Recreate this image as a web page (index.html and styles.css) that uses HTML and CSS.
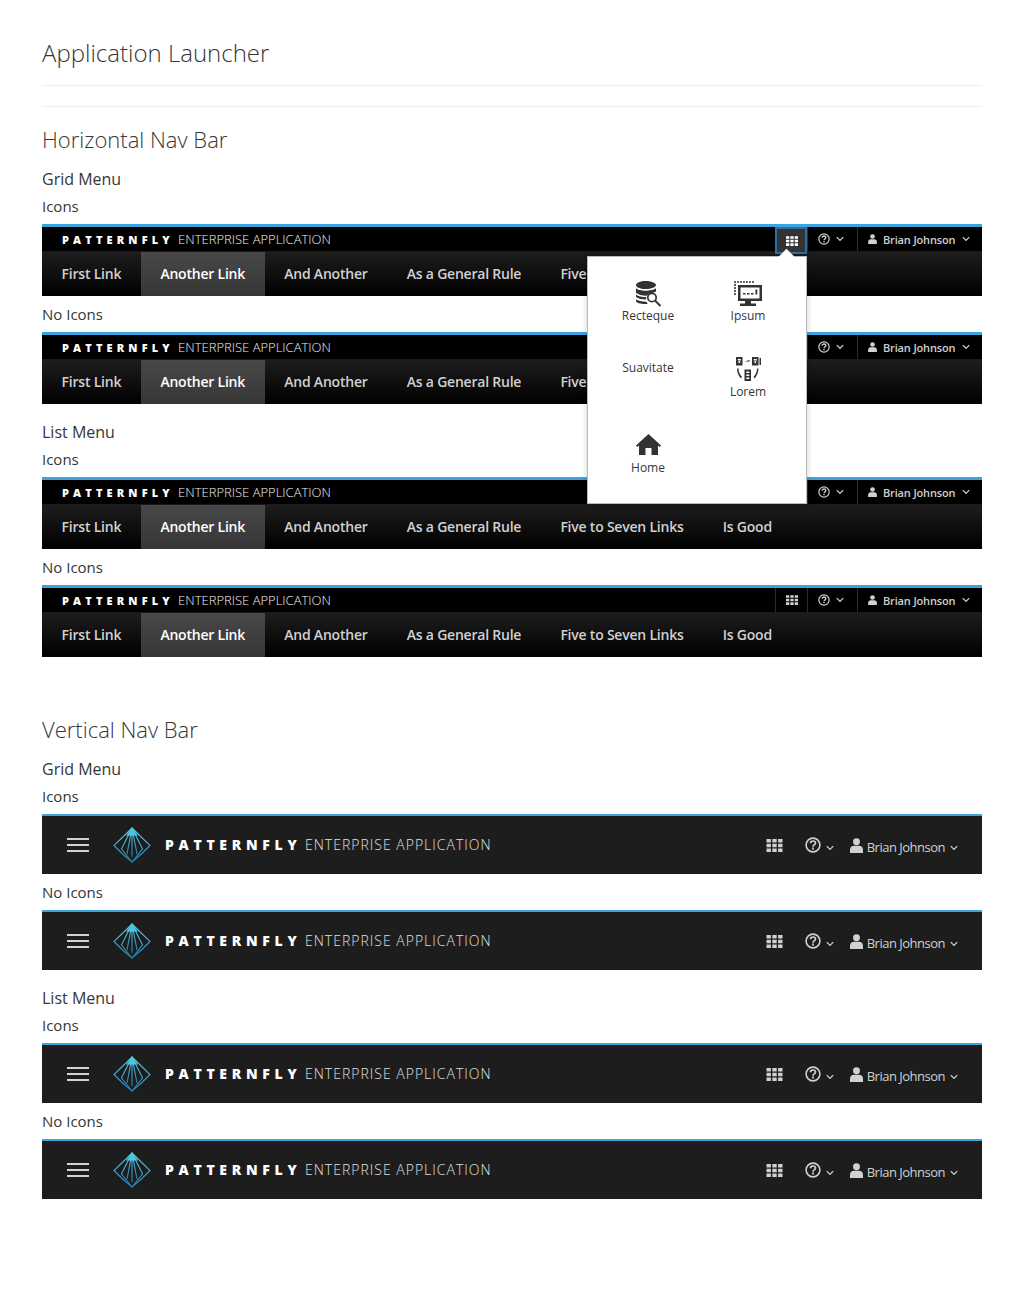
FILE: index.html
```html
<!DOCTYPE html>
<html lang="en">
<head>
  <meta charset="UTF-8" />
  <title>Application Launcher</title>
  <link rel="stylesheet" href="styles.css">
</head>
<body>

<svg class="defs" width="0" height="0" aria-hidden="true">
  <defs>
    <linearGradient id="logo-grad" x1="0" y1="0" x2="0" y2="1">
      <stop offset="0" stop-color="#5fd0e8"/>
      <stop offset="1" stop-color="#1f7fb5"/>
    </linearGradient>
    <symbol id="i-apps" viewBox="0 0 16 13">
      <path fill="currentColor" d="M0 0h4.4v3.6H0zM5.8 0h4.4v3.6H5.8zM11.6 0H16v3.6h-4.4zM0 4.7h4.4v3.6H0zM5.8 4.7h4.4v3.6H5.8zM11.6 4.7H16v3.6h-4.4zM0 9.4h4.4V13H0zM5.8 9.4h4.4V13H5.8zM11.6 9.4H16V13h-4.4z"/>
    </symbol>
    <symbol id="i-help" viewBox="0 0 16 16">
      <circle cx="8" cy="8" r="6.9" fill="none" stroke="currentColor" stroke-width="1.6"/>
      <path fill="none" stroke="currentColor" stroke-width="1.7" d="M5.5 6.2c0-1.5 1.2-2.2 2.5-2.2s2.5.8 2.5 2.1c0 1.8-2.5 1.7-2.5 3.6"/>
      <path fill="currentColor" d="M7.1 10.6h1.8v1.8H7.1z"/>
    </symbol>
    <symbol id="i-user" viewBox="0 0 14 16">
      <circle cx="7" cy="4" r="3.7" fill="currentColor"/>
      <path fill="currentColor" d="M0 16v-3.4C0 9.800 2 8.300 4 8.300h6c2 0 4 1.500 4 4.300V16z"/>
    </symbol>
    <symbol id="i-caret" viewBox="0 0 10 7">
      <path fill="none" stroke="currentColor" stroke-width="1.6" d="M1 1.200l4 4 4-4"/>
    </symbol>
    <symbol id="i-logo" viewBox="0 0 38 36">
      <g fill="none" stroke="url(#logo-grad)" stroke-width="1.100">
        <path d="M19 1L37 18.500 29 26.500 19 35 9 26.500 1 18.500z"/>
        <path d="M19 1L8.500 22 19 35 29.500 22z"/>
        <path d="M19 1L14 27M19 1L24 27M19 1V30"/>
      </g>
      <path fill="#4fc3e0" d="M19 1l6 7.500H13z"/>
    </symbol>
    <symbol id="i-db" viewBox="0 0 27 26">
      <path fill="currentColor" d="M1 4c0-2.200 4.500-4 9.500-4S21 1.800 21 4s-4.500 4-10.500 4S1 6.200 1 4z"/>
      <path fill="currentColor" d="M1 7c1.500 2 5.500 2.700 9.500 2.700S19.500 9 21 7v3.500c-1.500.8-3 1.300-4.500 1.500-2 .2-3.500 1.200-4.400 2.700-4 .2-8.600-.8-11.100-3zM1 13.500c2 1.800 6 2.700 10.400 2.700-.3.800-.4 1.500-.3 2.300-4 0-8-.8-10.100-2.500zM1 18.500c2 1.300 6 2.300 10.500 2.200.3.800.7 1.400 1.200 2-.7.200-1.500.3-2.200.3C5.500 23 1 22 1 20z"/>
      <circle cx="17" cy="16.500" r="4.200" fill="none" stroke="currentColor" stroke-width="1.700"/>
      <path fill="none" stroke="currentColor" stroke-width="2" d="M20 19.500l5.500 5.500"/>
    </symbol>
    <symbol id="i-screen" viewBox="0 0 28 26">
      <path fill="none" stroke="currentColor" stroke-width="1.600" stroke-dasharray="2 1" d="M1 14V1h20"/>
      <path fill="currentColor" d="M4 4h24v16H17v2.500h5V25H6v-2.500h5V20H4zm2.500 2.500v11h19v-11z"/>
      <path fill="currentColor" d="M9 12h2.500v1.600H9zM13 12h2.500v1.600H13zM17 12h2.500v1.600H17zM21.500 8.500h1.800v5h-1.800z"/>
    </symbol>
    <symbol id="i-cluster" viewBox="0 0 26 25">
      <path fill="currentColor" fill-rule="evenodd" d="M1 0h6.500v8.500H1zM2.800 2v1.500h3V2zM3.300 5a1 1 0 1 0 2 0 1 1 0 0 0-2 0zM17 0h6.500v8.500H17zM18.800 2v1.500h3V2zM19.300 5a1 1 0 1 0 2 0 1 1 0 0 0-2 0zM9.500 12.500H16V24H9.500zM11.300 14.500V16h3v-1.500zM11.300 17.500V19h3v-1.500zM11.300 20.500V22h3v-1.500z"/>
      <path fill="currentColor" d="M9.500 4.500l5-1.500v1.500zM24.500 1H26v7h-1.500zM2 11.500h1.500c0 3 1.200 6 3.500 8.500l-1 1.500C3.300 18.500 2 15 2 11.500zM23.500 11.500H22c0 3-1.200 6-3.500 8.500l1 1.500c2.700-3 4-6.500 4-10z"/>
    </symbol>
    <symbol id="i-home" viewBox="0 0 25 21">
      <path fill="currentColor" d="M12.500 0L25 11.500l-1.300 1.400-1.700-1.500V21h-6.500v-7h-6v7H3V11.400l-1.700 1.500L0 11.500z"/>
    </symbol>
  </defs>
</svg>

<main class="page">
  <h1 class="page-title">Application Launcher</h1>
  <hr class="rule rule-first">
  <hr class="rule rule-second">

  <h2 class="section-title">Horizontal Nav Bar</h2>
  <h3 class="group-title">Grid Menu</h3>
  <h4 class="case-title">Icons</h4>

  <div class="hnav">
    <div class="hnav-top">
      <div class="hnav-brand"><b>PATTERNFLY</b> ENTERPRISE APPLICATION</div>
      <div class="hnav-util">
        <div class="hnav-cell cell-apps is-open">
          <svg class="ic-apps"><use href="#i-apps"/></svg>
        </div>
        <div class="launcher">
          <span class="launcher-arrow"></span>
          <a class="launcher-item"><svg class="ic-db"><use href="#i-db"/></svg>Recteque</a>
          <a class="launcher-item"><svg class="ic-screen"><use href="#i-screen"/></svg>Ipsum</a>
          <a class="launcher-item item-plain">Suavitate</a>
          <a class="launcher-item item-cluster"><svg class="ic-cluster"><use href="#i-cluster"/></svg>Lorem</a>
          <a class="launcher-item item-home"><svg class="ic-home"><use href="#i-home"/></svg>Home</a>
        </div>
        <div class="hnav-cell cell-help">
          <svg class="ic-help"><use href="#i-help"/></svg>
          <svg class="ic-caret"><use href="#i-caret"/></svg>
        </div>
        <div class="hnav-cell cell-user">
          <svg class="ic-user"><use href="#i-user"/></svg>
          <span>Brian Johnson</span>
          <svg class="ic-caret"><use href="#i-caret"/></svg>
        </div>
      </div>
    </div>
    <ul class="hnav-links">
      <li>First Link</li><li class="active">Another Link</li><li>And Another</li><li>As a General Rule</li><li>Five to Seven Links</li><li>Is Good</li>
    </ul>
  </div>

  <h4 class="case-title after-bar">No Icons</h4>

  <div class="hnav">
    <div class="hnav-top">
      <div class="hnav-brand"><b>PATTERNFLY</b> ENTERPRISE APPLICATION</div>
      <div class="hnav-util">
        <div class="hnav-cell cell-apps"><svg class="ic-apps"><use href="#i-apps"/></svg></div>
        <div class="hnav-cell cell-help">
          <svg class="ic-help"><use href="#i-help"/></svg>
          <svg class="ic-caret"><use href="#i-caret"/></svg>
        </div>
        <div class="hnav-cell cell-user">
          <svg class="ic-user"><use href="#i-user"/></svg>
          <span>Brian Johnson</span>
          <svg class="ic-caret"><use href="#i-caret"/></svg>
        </div>
      </div>
    </div>
    <ul class="hnav-links">
      <li>First Link</li><li class="active">Another Link</li><li>And Another</li><li>As a General Rule</li><li>Five to Seven Links</li><li>Is Good</li>
    </ul>
  </div>

  <h3 class="group-title after-group">List Menu</h3>
  <h4 class="case-title">Icons</h4>

  <div class="hnav">
    <div class="hnav-top">
      <div class="hnav-brand"><b>PATTERNFLY</b> ENTERPRISE APPLICATION</div>
      <div class="hnav-util">
        <div class="hnav-cell cell-apps"><svg class="ic-apps"><use href="#i-apps"/></svg></div>
        <div class="hnav-cell cell-help">
          <svg class="ic-help"><use href="#i-help"/></svg>
          <svg class="ic-caret"><use href="#i-caret"/></svg>
        </div>
        <div class="hnav-cell cell-user">
          <svg class="ic-user"><use href="#i-user"/></svg>
          <span>Brian Johnson</span>
          <svg class="ic-caret"><use href="#i-caret"/></svg>
        </div>
      </div>
    </div>
    <ul class="hnav-links">
      <li>First Link</li><li class="active">Another Link</li><li>And Another</li><li>As a General Rule</li><li>Five to Seven Links</li><li>Is Good</li>
    </ul>
  </div>

  <h4 class="case-title after-bar">No Icons</h4>

  <div class="hnav">
    <div class="hnav-top">
      <div class="hnav-brand"><b>PATTERNFLY</b> ENTERPRISE APPLICATION</div>
      <div class="hnav-util">
        <div class="hnav-cell cell-apps"><svg class="ic-apps"><use href="#i-apps"/></svg></div>
        <div class="hnav-cell cell-help">
          <svg class="ic-help"><use href="#i-help"/></svg>
          <svg class="ic-caret"><use href="#i-caret"/></svg>
        </div>
        <div class="hnav-cell cell-user">
          <svg class="ic-user"><use href="#i-user"/></svg>
          <span>Brian Johnson</span>
          <svg class="ic-caret"><use href="#i-caret"/></svg>
        </div>
      </div>
    </div>
    <ul class="hnav-links">
      <li>First Link</li><li class="active">Another Link</li><li>And Another</li><li>As a General Rule</li><li>Five to Seven Links</li><li>Is Good</li>
    </ul>
  </div>

  <h2 class="section-title section-vertical">Vertical Nav Bar</h2>
  <h3 class="group-title">Grid Menu</h3>
  <h4 class="case-title">Icons</h4>

  <div class="vnav">
    <div class="burger"><span></span><span></span><span></span></div>
    <svg class="ic-logo"><use href="#i-logo"/></svg>
    <div class="vnav-brand"><b>PATTERNFLY</b> ENTERPRISE APPLICATION</div>
    <div class="vnav-util">
      <svg class="v-apps"><use href="#i-apps"/></svg>
      <svg class="v-help"><use href="#i-help"/></svg>
      <svg class="v-caret v-caret-help"><use href="#i-caret"/></svg>
      <svg class="v-user"><use href="#i-user"/></svg>
      <span class="v-name">Brian Johnson</span>
      <svg class="v-caret"><use href="#i-caret"/></svg>
    </div>
  </div>

  <h4 class="case-title after-vbar">No Icons</h4>

  <div class="vnav">
    <div class="burger"><span></span><span></span><span></span></div>
    <svg class="ic-logo"><use href="#i-logo"/></svg>
    <div class="vnav-brand"><b>PATTERNFLY</b> ENTERPRISE APPLICATION</div>
    <div class="vnav-util">
      <svg class="v-apps"><use href="#i-apps"/></svg>
      <svg class="v-help"><use href="#i-help"/></svg>
      <svg class="v-caret v-caret-help"><use href="#i-caret"/></svg>
      <svg class="v-user"><use href="#i-user"/></svg>
      <span class="v-name">Brian Johnson</span>
      <svg class="v-caret"><use href="#i-caret"/></svg>
    </div>
  </div>

  <h3 class="group-title after-group">List Menu</h3>
  <h4 class="case-title">Icons</h4>

  <div class="vnav">
    <div class="burger"><span></span><span></span><span></span></div>
    <svg class="ic-logo"><use href="#i-logo"/></svg>
    <div class="vnav-brand"><b>PATTERNFLY</b> ENTERPRISE APPLICATION</div>
    <div class="vnav-util">
      <svg class="v-apps"><use href="#i-apps"/></svg>
      <svg class="v-help"><use href="#i-help"/></svg>
      <svg class="v-caret v-caret-help"><use href="#i-caret"/></svg>
      <svg class="v-user"><use href="#i-user"/></svg>
      <span class="v-name">Brian Johnson</span>
      <svg class="v-caret"><use href="#i-caret"/></svg>
    </div>
  </div>

  <h4 class="case-title after-vbar">No Icons</h4>

  <div class="vnav">
    <div class="burger"><span></span><span></span><span></span></div>
    <svg class="ic-logo"><use href="#i-logo"/></svg>
    <div class="vnav-brand"><b>PATTERNFLY</b> ENTERPRISE APPLICATION</div>
    <div class="vnav-util">
      <svg class="v-apps"><use href="#i-apps"/></svg>
      <svg class="v-help"><use href="#i-help"/></svg>
      <svg class="v-caret v-caret-help"><use href="#i-caret"/></svg>
      <svg class="v-user"><use href="#i-user"/></svg>
      <span class="v-name">Brian Johnson</span>
      <svg class="v-caret"><use href="#i-caret"/></svg>
    </div>
  </div>
</main>

</body>
</html>
```

FILE: styles.css
```css
* {
  box-sizing: border-box;
}

body {
  margin: 0;
  background: #fff;
  color: #363636;
  font-family: "Open Sans", sans-serif;
}

.defs {
  position: absolute;
}

.page {
  padding: 36px 42px 100px;
}

.page-title {
  margin: 0;
  font-size: 24px;
  line-height: 34px;
  font-weight: 300;
}

.rule {
  margin: 0;
  border: 0;
  border-top: 1px solid #ededed;
}

.rule-first {
  margin-top: 15px;
}

.rule-second {
  margin-top: 20px;
}

.section-title {
  margin: 19px 0 0;
  font-size: 22px;
  line-height: 26px;
  font-weight: 300;
}

.section-vertical {
  margin-top: 59px;
}

.group-title {
  margin: 16px 0 0;
  font-size: 16px;
  line-height: 22px;
  font-weight: 400;
}

.group-title.after-group {
  margin-top: 17px;
}

.case-title {
  margin: 6px 0 8px;
  font-size: 15px;
  line-height: 20px;
  font-weight: 400;
}

.case-title.after-bar {
  margin: 8px 0 8px;
}

.case-title.after-vbar {
  margin: 8px 0 8px;
}

/* horizontal bar */
.hnav {
  border-top: 3px solid #39a5dc;
  background: #000;
  color: #fff;
}

.hnav-top {
  display: flex;
  justify-content: space-between;
  height: 25px;
  border-bottom: 1px solid #1a1a1a;
}

.hnav-brand {
  padding-left: 20px;
  font-size: 13px;
  line-height: 25px;
  font-weight: 300;
  color: #f0f0f0;
  white-space: nowrap;
}

.hnav-brand b {
  margin-right: 1px;
  font-size: 11px;
  font-weight: 800;
  letter-spacing: 4.15px;
  color: #fff;
}

.hnav-util {
  position: relative;
  display: flex;
}

.hnav-cell {
  display: flex;
  align-items: center;
  border-left: 1px solid #2b2b2b;
  font-size: 11px;
  font-weight: 600;
  color: #d1d1d1;
}

.cell-apps {
  justify-content: center;
  width: 32px;
}

.cell-apps.is-open {
  position: relative;
  height: 27px;
  padding-left: 1px;
  border: 2px solid #2d6fa3;
  background: #333;
  color: #fff;
}

.cell-help {
  width: 50px;
  padding-left: 10px;
}

.cell-user {
  width: 125px;
  padding-left: 10px;
}

.cell-user span {
  margin: 0 7px 0 6px;
  letter-spacing: -0.15px;
}

.ic-apps {
  width: 12px;
  height: 10px;
}

.ic-help {
  width: 12px;
  height: 12px;
}

.ic-user {
  width: 9px;
  height: 10px;
}

.ic-caret {
  width: 8px;
  height: 6px;
}

.cell-help .ic-caret {
  margin-left: 6px;
  margin-top: -1px;
}

.cell-user .ic-caret {
  margin-top: -1px;
}

.hnav-links {
  display: flex;
  height: 44px;
  margin: 0;
  padding: 0;
  list-style: none;
  background: linear-gradient(#1d1d1d, #000);
}

.hnav-links li {
  padding: 0 19.6px;
  font-size: 14px;
  line-height: 44px;
  font-weight: 600;
  letter-spacing: -0.22px;
  color: #d1d1d1;
  white-space: nowrap;
}

.hnav-links li.active {
  background: linear-gradient(#484848, #363636);
  color: #fff;
}

/* launcher popup */
.launcher {
  position: absolute;
  top: 29px;
  left: -188px;
  z-index: 10;
  display: grid;
  grid-template-columns: 100px 100px;
  grid-template-rows: 77px 77px 76px;
  align-content: start;
  width: 220px;
  height: 248px;
  padding: 10px 10px 0;
  background: #fff;
  border: 1px solid #bbb;
  box-shadow: 0 2px 6px rgba(0, 0, 0, 0.2);
  color: #363636;
}

.launcher-arrow {
  position: absolute;
  top: -6px;
  left: 193px;
  width: 11px;
  height: 11px;
  background: #fff;
  transform: rotate(45deg);
}

.launcher-item {
  display: flex;
  flex-direction: column;
  align-items: center;
  justify-content: flex-start;
  padding-top: 14px;
  font-size: 12px;
  line-height: 17px;
  font-weight: 400;
}

.launcher-item.item-plain {
  padding-top: 15px;
}

.launcher-item.item-cluster {
  padding-top: 13px;
}

.launcher-item.item-home {
  padding-top: 13px;
}

.launcher-item svg {
  flex: none;
  color: #333;
}

.ic-db {
  width: 27px;
  height: 26px;
}

.ic-screen {
  width: 28px;
  height: 26px;
}

.ic-cluster {
  width: 26px;
  height: 25px;
  margin-bottom: 1px;
}

.ic-home {
  width: 25px;
  height: 21px;
  margin-bottom: 4px;
}

/* vertical bar */
.vnav {
  display: flex;
  align-items: center;
  height: 60px;
  border-top: 2px solid #39a5dc;
  background: #1d1d1d;
  color: #d1d1d1;
}

.burger {
  display: flex;
  flex-direction: column;
  gap: 4px;
  width: 22px;
  margin-left: 25px;
}

.burger span {
  height: 2px;
  background: #d1d1d1;
}

.ic-logo {
  width: 38px;
  height: 36px;
  margin-left: 24px;
}

.vnav-brand {
  margin-left: 14px;
  margin-bottom: 2px;
  font-size: 14px;
  font-weight: 300;
  letter-spacing: 1px;
  color: #e0e0e0;
  white-space: nowrap;
}

.vnav-brand b {
  margin-right: -1px;
  font-size: 14px;
  font-weight: 800;
  letter-spacing: 4.7px;
  color: #fff;
}

.vnav-util {
  display: flex;
  align-items: center;
  margin-left: auto;
  padding-right: 24px;
}

.v-apps {
  width: 17px;
  height: 13px;
}

.v-help {
  width: 16px;
  height: 16px;
  margin-left: 22px;
}

.v-caret {
  width: 8px;
  height: 6px;
  margin-top: 5px;
}

.v-caret-help {
  margin-left: 5px;
}

.v-user {
  width: 13px;
  height: 15px;
  margin-left: 16px;
}

.v-name {
  margin: 4px 5px 0 4px;
  font-size: 13px;
  font-weight: 400;
  letter-spacing: -0.5px;
  color: #d1d1d1;
}
```
